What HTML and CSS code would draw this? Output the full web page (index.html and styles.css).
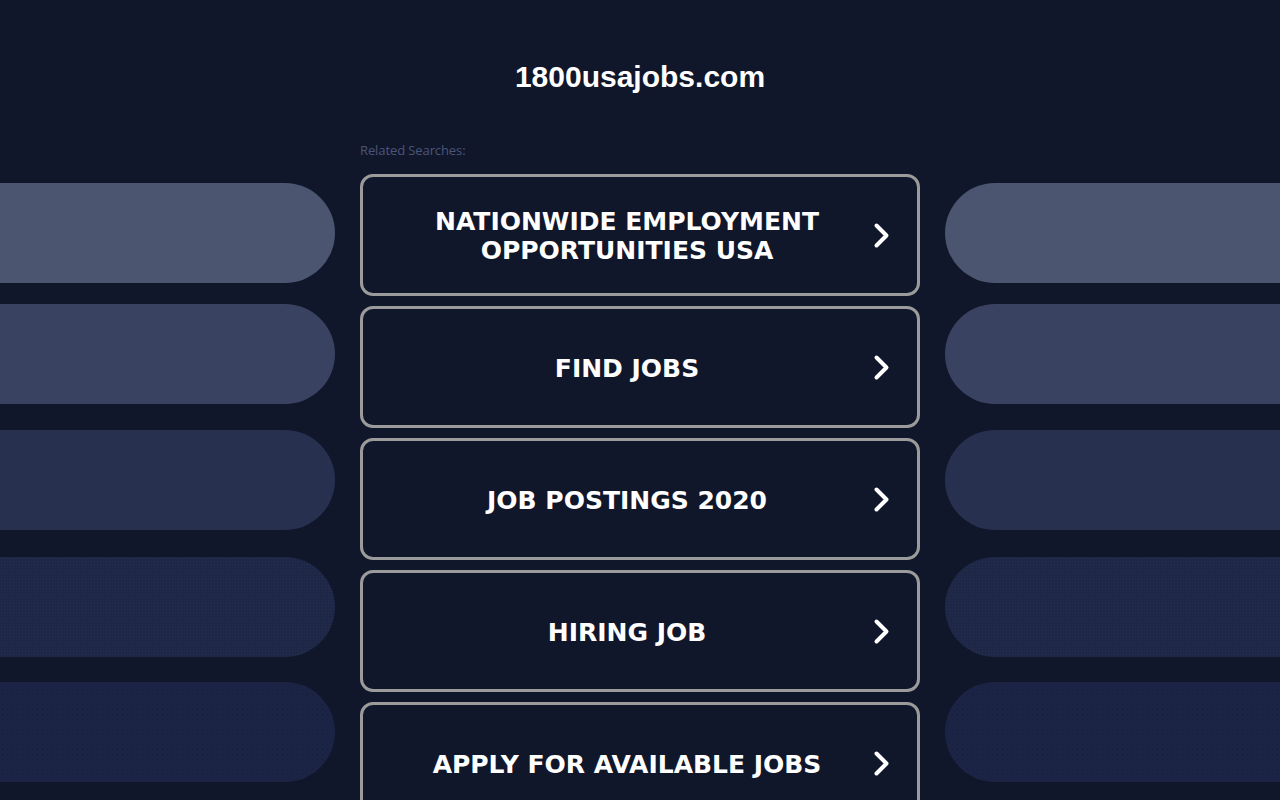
FILE: index.html
```html
<!DOCTYPE html>
<html lang="en">
<head>
<meta charset="utf-8">
<title>1800usajobs.com</title>
<link rel="stylesheet" href="styles.css">
</head>
<body>
<header class="header">
  <h1 class="domain">1800usajobs.com</h1>
</header>
<main class="layout">
  <div class="side side-left">
    <div class="pill pill-1"></div>
    <div class="pill pill-2"></div>
    <div class="pill pill-3"></div>
    <div class="pill pill-4"></div>
    <div class="pill pill-5"></div>
  </div>
  <section class="center">
    <p class="related">Related Searches:</p>
    <ul class="links">
      <li><a class="link" href="#"><span class="link-text">NATIONWIDE EMPLOYMENT OPPORTUNITIES USA</span><svg class="chev" viewBox="0 0 17 27" width="17" height="27"><polyline points="3.5,3.5 13.5,13.5 3.5,23.5"/></svg></a></li>
      <li><a class="link" href="#"><span class="link-text">FIND JOBS</span><svg class="chev" viewBox="0 0 17 27" width="17" height="27"><polyline points="3.5,3.5 13.5,13.5 3.5,23.5"/></svg></a></li>
      <li><a class="link" href="#"><span class="link-text">JOB POSTINGS 2020</span><svg class="chev" viewBox="0 0 17 27" width="17" height="27"><polyline points="3.5,3.5 13.5,13.5 3.5,23.5"/></svg></a></li>
      <li><a class="link" href="#"><span class="link-text">HIRING JOB</span><svg class="chev" viewBox="0 0 17 27" width="17" height="27"><polyline points="3.5,3.5 13.5,13.5 3.5,23.5"/></svg></a></li>
      <li><a class="link" href="#"><span class="link-text">APPLY FOR AVAILABLE JOBS</span><svg class="chev" viewBox="0 0 17 27" width="17" height="27"><polyline points="3.5,3.5 13.5,13.5 3.5,23.5"/></svg></a></li>
    </ul>
  </section>
  <div class="side side-right">
    <div class="pill pill-1"></div>
    <div class="pill pill-2"></div>
    <div class="pill pill-3"></div>
    <div class="pill pill-4"></div>
    <div class="pill pill-5"></div>
  </div>
</main>
</body>
</html>
```

FILE: styles.css
```css
html, body {
  margin: 0;
  padding: 0;
}
body {
  background: #11172b;
  font-family: "Liberation Sans", Arial, sans-serif;
  color: #fff;
  height: 800px;
  overflow: hidden;
}
.header {
  height: 133px;
  display: flex;
  align-items: flex-start;
  justify-content: center;
}
.domain {
  margin: 59px 0 0;
  font-size: 30px;
  line-height: 36px;
  font-weight: bold;
  color: #fff;
}
.layout {
  display: flex;
  gap: 25px;
}
.side {
  width: 335px;
  flex: none;
  display: flex;
  flex-direction: column;
  padding-top: 50px;
}
.pill {
  height: 100px;
  background: #4b5570;
}
.side-left .pill {
  border-radius: 0 50px 50px 0;
}
.side-right .pill {
  border-radius: 50px 0 0 50px;
}
.pill-2 { margin-top: 21px; background: #3a4261; }
.pill-3 { margin-top: 26px; background: #283050; }
.pill-4 {
  margin-top: 27px;
  background-color: #1e2746;
  background-image: radial-gradient(circle, rgba(55,70,110,0.3) 0.5px, transparent 0.8px);
  background-size: 3px 3px;
}
.pill-5 {
  margin-top: 25px;
  background-color: #1c2445;
  background-image: radial-gradient(circle, rgba(10,16,36,0.35) 0.5px, transparent 0.8px);
  background-size: 5px 5px;
}
.center {
  width: 560px;
  flex: none;
}
.related {
  margin: 0;
  height: 41px;
  padding-top: 9px;
  box-sizing: border-box;
  font-family: "Open Sans", "Liberation Sans", sans-serif;
  font-size: 13px;
  line-height: 16px;
  color: #4b5577;
  letter-spacing: -0.1px;
}
.links {
  list-style: none;
  margin: 0;
  padding: 0;
  display: flex;
  flex-direction: column;
  gap: 10px;
}
.link {
  display: flex;
  align-items: center;
  height: 122px;
  box-sizing: border-box;
  border: 3px solid #9b9b9b;
  border-radius: 13px;
  padding: 2px 27px 0 20px;
  text-decoration: none;
  color: #fff;
}
.link-text {
  flex: 1;
  text-align: center;
  font-family: "DejaVu Sans", Verdana, sans-serif;
  font-weight: bold;
  font-size: 25px;
  line-height: 29px;
  padding: 0 40px;
}
.chev {
  flex: none;
  margin-left: 2px;
  margin-top: -2px;
  fill: none;
  stroke: #fff;
  stroke-width: 4;
  stroke-linecap: round;
  stroke-linejoin: round;
}
```
